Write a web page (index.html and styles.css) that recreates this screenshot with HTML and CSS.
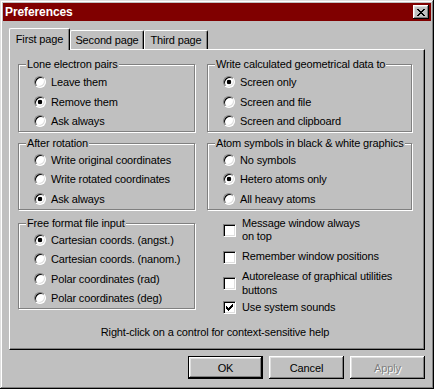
FILE: index.html
```html
<!DOCTYPE html>
<html lang="en">
<head>
  <meta charset="UTF-8" />
  <title>Preferences</title>
  <link rel="stylesheet" href="styles.css">
</head>
<body>

  <div class="window">
    <div class="titlebar">
      <span class="title">Preferences</span>
      <button class="close" aria-label="Close">
        <svg width="8" height="7" viewBox="0 0 8 7" shape-rendering="crispEdges">
          <path d="M0 0h2v1H0zM6 0h2v1H6zM1 1h2v1H1zM5 1h2v1H5zM2 2h4v1H2zM3 3h2v1H3zM2 4h4v1H2zM1 5h2v1H1zM5 5h2v1H5zM0 6h2v1H0zM6 6h2v1H6z" fill="#000"/>
        </svg>
      </button>
    </div>

    <div class="tabs">
      <div class="tab tab-first active">First page</div>
      <div class="tab tab-second">Second page</div>
      <div class="tab tab-third">Third page</div>
    </div>

    <div class="panel">
      <div class="columns">
        <div class="col">
          <fieldset class="group group-top">
            <legend>Lone electron pairs</legend>
            <label class="option"><span class="radio"></span>Leave them</label>
            <label class="option"><span class="radio checked"></span>Remove them</label>
            <label class="option"><span class="radio"></span>Ask always</label>
          </fieldset>

          <fieldset class="group">
            <legend>After rotation</legend>
            <label class="option"><span class="radio"></span>Write original coordinates</label>
            <label class="option"><span class="radio"></span>Write rotated coordinates</label>
            <label class="option"><span class="radio checked"></span>Ask always</label>
          </fieldset>

          <fieldset class="group group-last">
            <legend>Free format file input</legend>
            <label class="option"><span class="radio checked"></span>Cartesian coords. (angst.)</label>
            <label class="option"><span class="radio"></span>Cartesian coords. (nanom.)</label>
            <label class="option"><span class="radio"></span>Polar coordinates (rad)</label>
            <label class="option"><span class="radio"></span>Polar coordinates (deg)</label>
          </fieldset>
        </div>

        <div class="col">
          <fieldset class="group group-top">
            <legend>Write calculated geometrical data to</legend>
            <label class="option"><span class="radio checked"></span>Screen only</label>
            <label class="option"><span class="radio"></span>Screen and file</label>
            <label class="option"><span class="radio"></span>Screen and clipboard</label>
          </fieldset>

          <fieldset class="group">
            <legend>Atom symbols in black &amp; white graphics</legend>
            <label class="option"><span class="radio"></span>No symbols</label>
            <label class="option"><span class="radio checked"></span>Hetero atoms only</label>
            <label class="option"><span class="radio"></span>All heavy atoms</label>
          </fieldset>

          <div class="checks">
            <label class="check check-tall"><span class="box"></span><span>Message window always<br>on top</span></label>
            <label class="check check-tall"><span class="box"></span><span>Remember window positions</span></label>
            <label class="check check-mid"><span class="box"></span><span>Autorelease of graphical utilities<br>buttons</span></label>
            <label class="check check-short">
              <span class="box">
                <svg width="7" height="7" viewBox="0 0 7 7" shape-rendering="crispEdges">
                  <path d="M0 2h1v3H0zM1 3h1v3H1zM2 4h1v3H2zM3 3h1v3H3zM4 2h1v3H4zM5 1h1v3H5zM6 0h1v3H6z" fill="#000"/>
                </svg>
              </span>
              <span>Use system sounds</span>
            </label>
          </div>
        </div>
      </div>

      <p class="help">Right-click on a control for context-sensitive help</p>
    </div>

    <div class="buttons">
      <button class="btn default">OK</button>
      <button class="btn">Cancel</button>
      <button class="btn" disabled>Apply</button>
    </div>
  </div>

</body>
</html>
```

FILE: styles.css
```css
* { box-sizing: border-box; margin: 0; padding: 0; }
html, body {
  width: 100%;
  height: 100%;
  background: #c0c0c0;
  overflow: hidden;
}
body {
  font-family: "Liberation Sans", Arial, sans-serif;
  font-size: 11px;
  letter-spacing: -0.15px;
  color: #000;
}

.window {
  width: 434px;
  height: 389px;
  padding: 3px;
  display: flex;
  flex-direction: column;
  background: #c0c0c0;
  box-shadow: inset -1px -1px #000, inset 1px 1px #dfdfdf,
              inset -2px -2px #808080, inset 2px 2px #fff;
}

/* title bar */
.titlebar {
  height: 18px;
  padding: 0 2px;
  display: flex;
  align-items: center;
  justify-content: space-between;
  background: #800000;
}
.title {
  color: #fff;
  font-weight: bold;
  font-size: 12px;
  letter-spacing: -0.1px;
}
.close {
  width: 16px;
  height: 14px;
  border: none;
  display: flex;
  align-items: center;
  justify-content: center;
  background: #c0c0c0;
  box-shadow: inset -1px -1px #000, inset 1px 1px #fff,
              inset -2px -2px #808080, inset 2px 2px #dfdfdf;
}
.close svg { display: block; }

/* tabs */
.tabs {
  height: 21px;
  margin: 7px 6px 0;
  display: flex;
  align-items: flex-end;
}
.tab {
  height: 19px;
  display: flex;
  align-items: center;
  justify-content: center;
  background: #c0c0c0;
  border-top: 1px solid #fff;
  border-left: 1px solid #fff;
  border-right: 1px solid #000;
  border-radius: 2px 2px 0 0;
  box-shadow: inset -1px 0 #808080;
}
.tab-first { width: 61px; }
.tab-second { width: 74px; }
.tab-third { width: 64px; }
.tab.active {
  height: 22px;
  margin-bottom: -1px;
  padding-bottom: 2px;
  position: relative;
  z-index: 1;
}

.panel {
  height: 301px;
  margin: 0 6px;
  padding: 8px 12px 10.5px 8px;
  display: flex;
  flex-direction: column;
  border-top: 1px solid #fff;
  border-left: 1px solid #fff;
  border-right: 1px solid #000;
  border-bottom: 1px solid #000;
  box-shadow: inset -1px -1px #808080;
}

.columns {
  display: grid;
  grid-template-columns: 177px 205px;
  column-gap: 12px;
}
.col {
  display: flex;
  flex-direction: column;
  gap: 5px;
}

/* etched group boxes */
.group {
  min-width: 0;
  padding: 0 0 0 15px;
  border: 1px solid #808080;
  box-shadow: inset 1px 1px #fff, 1px 1px 0 #fff;
}
.group-top { padding-top: 1.5px; }
.group-last { margin-top: 2.5px; }
.group legend {
  margin-left: -8px;
  padding: 0 1px;
  line-height: 13px;
  background: #c0c0c0;
}

.option {
  height: 19.5px;
  display: flex;
  align-items: center;
  gap: 5px;
  white-space: nowrap;
}
.radio {
  width: 12px;
  height: 12px;
  flex: none;
  border-radius: 50%;
  border: 1px solid;
  border-color: #808080 #fff #fff #808080;
  background: #fff;
  box-shadow: inset 1px 1px #000, inset -1px -1px #dfdfdf;
}
.radio.checked {
  background: radial-gradient(circle, #000 0, #000 2px, #fff 2.6px);
}

/* checkboxes */
.checks {
  padding-top: 2px;
  display: flex;
  flex-direction: column;
}
.check {
  padding-left: 16px;
  display: flex;
  align-items: center;
  gap: 6px;
  line-height: 13.5px;
  white-space: nowrap;
}
.check-tall { height: 27px; }
.check-mid { height: 26px; }
.check-short { height: 22px; }
.box {
  width: 13px;
  height: 13px;
  flex: none;
  display: flex;
  align-items: center;
  justify-content: center;
  border: 1px solid;
  border-color: #808080 #fff #fff #808080;
  background: #fff;
  box-shadow: inset 1px 1px #000, inset -1px -1px #dfdfdf;
}
.box svg { display: block; }

.help {
  margin-top: auto;
  line-height: 13px;
  text-align: center;
}

/* dialog buttons */
.buttons {
  margin: 6px 6px 0;
  display: flex;
  justify-content: flex-end;
  gap: 6px;
}
.btn {
  width: 75px;
  height: 23px;
  border: none;
  font: inherit;
  letter-spacing: inherit;
  color: #000;
  background: #c0c0c0;
  box-shadow: inset -1px -1px #000, inset 1px 1px #fff,
              inset -2px -2px #808080, inset 2px 2px #dfdfdf;
}
.btn.default {
  border: 1px solid #000;
}
.btn:disabled {
  color: #808080;
  text-shadow: 1px 1px #fff;
}
```
